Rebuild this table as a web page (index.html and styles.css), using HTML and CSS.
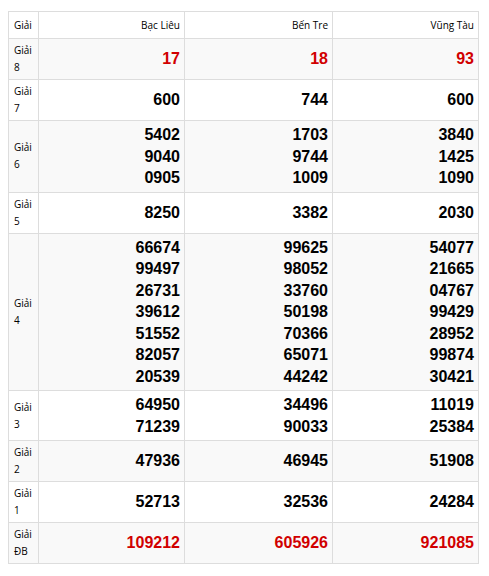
FILE: index.html
```html
<!DOCTYPE html>
<html lang="vi">
<head>
<meta charset="utf-8">
<title>Kết quả xổ số</title>
<link rel="stylesheet" href="styles.css">
</head>
<body>
<table class="kq">
  <colgroup>
    <col class="c-label"><col class="c-prov"><col class="c-prov2"><col class="c-prov">
  </colgroup>
  <thead>
    <tr><th class="lbl">Giải</th><th>Bạc Liêu</th><th>Bến Tre</th><th>Vũng Tàu</th></tr>
  </thead>
  <tbody>
    <tr class="alt">
      <td class="lbl">Giải<br>8</td>
      <td class="num red"><div>17</div></td>
      <td class="num red"><div>18</div></td>
      <td class="num red"><div>93</div></td>
    </tr>
    <tr>
      <td class="lbl">Giải<br>7</td>
      <td class="num"><div>600</div></td>
      <td class="num"><div>744</div></td>
      <td class="num"><div>600</div></td>
    </tr>
    <tr class="alt">
      <td class="lbl">Giải<br>6</td>
      <td class="num"><div>5402</div><div>9040</div><div>0905</div></td>
      <td class="num"><div>1703</div><div>9744</div><div>1009</div></td>
      <td class="num"><div>3840</div><div>1425</div><div>1090</div></td>
    </tr>
    <tr>
      <td class="lbl">Giải<br>5</td>
      <td class="num"><div>8250</div></td>
      <td class="num"><div>3382</div></td>
      <td class="num"><div>2030</div></td>
    </tr>
    <tr class="alt">
      <td class="lbl">Giải<br>4</td>
      <td class="num"><div>66674</div><div>99497</div><div>26731</div><div>39612</div><div>51552</div><div>82057</div><div>20539</div></td>
      <td class="num"><div>99625</div><div>98052</div><div>33760</div><div>50198</div><div>70366</div><div>65071</div><div>44242</div></td>
      <td class="num"><div>54077</div><div>21665</div><div>04767</div><div>99429</div><div>28952</div><div>99874</div><div>30421</div></td>
    </tr>
    <tr>
      <td class="lbl">Giải<br>3</td>
      <td class="num"><div>64950</div><div>71239</div></td>
      <td class="num"><div>34496</div><div>90033</div></td>
      <td class="num"><div>11019</div><div>25384</div></td>
    </tr>
    <tr class="alt">
      <td class="lbl">Giải<br>2</td>
      <td class="num"><div>47936</div></td>
      <td class="num"><div>46945</div></td>
      <td class="num"><div>51908</div></td>
    </tr>
    <tr>
      <td class="lbl">Giải<br>1</td>
      <td class="num"><div>52713</div></td>
      <td class="num"><div>32536</div></td>
      <td class="num"><div>24284</div></td>
    </tr>
    <tr class="alt">
      <td class="lbl">Giải<br>ĐB</td>
      <td class="num red"><div>109212</div></td>
      <td class="num red"><div>605926</div></td>
      <td class="num red"><div>921085</div></td>
    </tr>
  </tbody>
</table>
</body>
</html>
```

FILE: styles.css
```css
html, body {
  margin: 0;
  padding: 0;
  background: #ffffff;
}
body {
  padding: 11px 8px 0 8px;
  font-family: "Open Sans", "Noto Sans", sans-serif;
  color: #000;
}
.kq {
  border-collapse: collapse;
  width: 471px;
  table-layout: fixed;
}
.c-label { width: 30px; }
.c-prov { width: 146px; }
.c-prov2 { width: 148px; }
.kq th, .kq td {
  border: 1px solid #dddddd;
  padding: 3px 4px;
  text-align: right;
  vertical-align: middle;
}
.kq th {
  font-weight: normal;
  font-size: 10px;
  line-height: 20px;
  color: #000;
}
.kq .lbl {
  text-align: left;
  padding-left: 5px;
  padding-right: 2px;
  font-size: 10px;
  line-height: 17px;
  color: #000;
}
.kq tr.alt td {
  background: #f9f9f9;
}
.num {
  font-family: "Liberation Sans", Arial, sans-serif;
  font-weight: bold;
  font-size: 16px;
  line-height: 21.5px;
  color: #000;
}
.num.red {
  color: #d10000;
}
```
